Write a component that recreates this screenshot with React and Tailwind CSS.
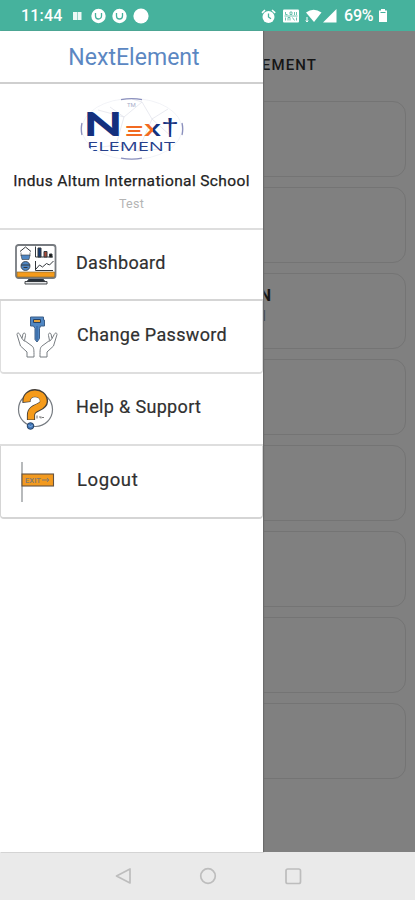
import React from 'react'

const STATUS_FONT = "font-['Roboto',sans-serif]"

const StatusBar = () => (
  <header className={`flex h-[31px] shrink-0 items-center bg-[#46b29d] pl-[21px] pr-[27px] text-white ${STATUS_FONT}`}>
    <span className="w-[42px] whitespace-nowrap text-[16px] font-medium leading-none tracking-[0.2px]">11:44</span>
    <svg className="ml-[9px]" width="78" height="16" viewBox="0 0 78 16" fill="#fff">
      <path d="M1 4h4v8H1zM5.500 4h4v8h-4z" opacity=".9" />
      <circle cx="26.500" cy="8" r="7.200" />
      <circle cx="47.500" cy="8" r="7.200" />
      <circle cx="69" cy="8" r="7.600" />
      <g fill="none" stroke="#46b29d" strokeWidth="1.300">
        <path d="M23.500 5v3a3 3 0 0 0 6 0V5" />
        <path d="M44.500 5v3a3 3 0 0 0 6 0V5" />
      </g>
    </svg>
    <svg className="ml-auto overflow-visible" width="77" height="16" viewBox="0 0 77 16" fill="#fff">
      {/* alarm */}
      <circle cx="5.500" cy="9" r="6" />
      <path d="M-1 4.800 2 2M12.200 4.800 9 2" stroke="#fff" strokeWidth="1.600" />
      <path d="M5.500 5.500V9l2.500 1.800" fill="none" stroke="#46b29d" strokeWidth="1.300" />
      {/* volte */}
      <rect x="20" y="1.500" width="16" height="13" rx="1" />
      <path d="M22.500 4v2.500h2M27 4h2v2.500h-2zM31.500 4v3M33.500 4v3M22.500 9.500v3M25 12.500v-3h2v3M29.500 9.500l2 3M33.500 9.500v3M21.500 8h13" fill="none" stroke="#46b29d" strokeWidth=".8" />
      {/* wifi + signal */}
      <path d="M43 4.500Q50.500 -1 58.500 4.500L51 14Z" />
      <path d="M44 9v5M42.800 12.500 44 14l1.200-1.500" fill="none" stroke="#fff" />
      <path d="M60 14.500 73.500 1v13.500z" />
    </svg>
    <span className="ml-[4px] w-[31px] whitespace-nowrap text-[16px] font-medium leading-none tracking-[-0.2px]">69%</span>
    <svg className="ml-[3px]" width="10" height="15" viewBox="0 0 10 15" fill="#fff">
      <path d="M3 1h4v1.500h2V14H1V2.500h2z" />
      <path d="M2.500 4.500h5" stroke="#46b29d" />
    </svg>
  </header>
)

const Logo = () => (
  <svg className="block" width="104" height="64" viewBox="0 0 104 64">
    <g fill="none" stroke="#dfe1ea" strokeWidth=".7">
      <path d="M18 13 44 20 62 5 72 22 88 12M44 20 36 48 58 54 72 22M30 10 44 20M72 22 92 40M36 48 22 50M58 54 80 52M52 2 62 5" />
    </g>
    <ellipse cx="52" cy="32" rx="50" ry="30.500" fill="none" stroke="#eceef3" strokeWidth=".7" />
    <g fill="none" stroke="#8b90bd" strokeWidth="1.300">
      <path d="M41 2.700Q52 .5 62 2.700M41 61.200Q52 63 62 61.200" />
      <path d="M2 26Q.5 32 2 38M102 26Q103.500 32 102 38" />
    </g>
    <text x="47" y="9.500" fontFamily="Roboto, sans-serif" fontSize="6" fill="#a6acc9">TM</text>
    <text x="3.500" y="39" fontFamily="Lato, sans-serif" fontSize="33" fontWeight="900" fill="#14307e" textLength="39" lengthAdjust="spacingAndGlyphs">N</text>
    <text x="43" y="39" fontFamily="'DejaVu Sans', sans-serif" fontSize="14" fontWeight="700" fill="#f26a21" textLength="22" lengthAdjust="spacingAndGlyphs">Ξ</text>
    <defs>
      <linearGradient id="xSplit">
        <stop offset="50%" stopColor="#f26a21" />
        <stop offset="50%" stopColor="#14307e" />
      </linearGradient>
    </defs>
    <text x="64" y="39" fontFamily="'Open Sans', sans-serif" fontSize="21" fontWeight="600" fill="url(#xSplit)" textLength="17" lengthAdjust="spacingAndGlyphs">x</text>
    <text x="81" y="37.500" fontFamily="'Liberation Sans', sans-serif" fontSize="24" fill="#14307e" textLength="18" lengthAdjust="spacingAndGlyphs">†</text>
    <text x="7" y="54" fontFamily="'Open Sans', sans-serif" fontSize="13" fontWeight="500" fill="#27408c" textLength="88" lengthAdjust="spacingAndGlyphs">ELEMENT</text>
    <path d="M5 48 17 56H5zM99 48 90 56h9z" fill="#fff" />
  </svg>
)

const DashboardIcon = () => (
  <svg width="42" height="42" viewBox="0 0 42 42" fill="none" stroke="#33383d" strokeWidth="1">
    <path d="M10 37.500h22v2.500H10z" fill="#e5e7e9" strokeWidth=".9" />
    <path d="M15 34h12l3 3.500H12z" fill="#28313a" />
    <rect x="1" y="1" width="39.500" height="33" rx="2.500" fill="#fff" stroke="#777b80" strokeWidth="1.800" />
    <path d="M2 28h37.500v5H2z" fill="#f59b1b" stroke="#8a6a35" strokeWidth=".7" />
    <path d="M5 7.500 10.500 3l5.500 4.500" />
    <path d="M6 11h9l-1 4.500H7z" fill="#4f87c4" strokeWidth=".6" />
    <path d="M6 8.500v3M15 8.500v3" strokeWidth=".6" />
    <circle cx="10.500" cy="22" r="4.500" fill="#4f87c4" strokeWidth=".8" />
    <path d="M6 21h9M8.500 23.500h4" strokeWidth="1.200" />
    <path d="M20.500 2.500V13H38M20.500 17v9.500H38" />
    <path d="M23 4h3v9h-3z" fill="#173a72" />
    <path d="M29 7.500h3V13h-3z" fill="#a94836" />
    <path d="M34.500 10H37v3h-2.500z" fill="#111" />
    <path d="m21 25 3.500-4 3 2 4-3.500 3 1.500 4-4" />
  </svg>
)

const KeyHandsIcon = () => (
  <svg width="42" height="42" viewBox="0 0 42 42" fill="none" stroke="#777c81" strokeWidth="1" strokeLinejoin="round">
    <path d="M14.500 1h13v3h1v6h-4l-1 2.500v10L21 26l-2-2.500v-11L17.500 10h-3z" fill="#4f87c4" stroke="#3d5e87" />
    <path d="M17.500 3.500h7v3h-7z" fill="#e3a13a" stroke="#284264" />
    <path d="M21 10v14" stroke="#315f99" />
    <path d="M11 41v-5l-6.500-6L1 18.500c0-2 2-2 2.800 0l2.200 4 1-4.500c1-2 3-.5 2.500 1.500l-1 5 7.500 5.500c2 1.500 2 4 2 11z" fill="#fff" />
    <path d="m6 22.500 2.500 3" />
    <path d="M31 41v-5l6.500-6L41 18.500c0-2-2-2-2.800 0l-2.200 4-1-4.500c-1-2-3-.5-2.500 1.500l1 5L26 30c-2 1.500-2 4-2 11z" fill="#fff" />
    <path d="m36 22.500-2.500 3" />
  </svg>
)

const HelpIcon = () => (
  <svg width="38" height="42" viewBox="0 0 38 42" fill="none">
    <circle cx="18.500" cy="21.500" r="17" stroke="#777c82" strokeWidth="1.200" />
    <path d="M9.500 14.500C8 2.500 27 2 27 13.500C26.500 21 14 18 14 27V32" stroke="#47413a" strokeWidth="8.200" />
    <path d="M9.600 13.800C9 3 26.500 3 26.500 13.500C26 20.500 14 18 14 27V31.500" stroke="#f59b1b" strokeWidth="6.400" />
    <path d="M20 27.500v3M22 29h2v1.500M25 29.500h2" stroke="#777" strokeWidth="1.100" />
    <circle cx="13.500" cy="38" r="3.300" fill="#4379bb" stroke="#284264" />
    <path d="m11.500 37 2 2 2-2" stroke="#9dc3ea" strokeWidth=".8" />
  </svg>
)

const LogoutIcon = () => (
  <svg width="36" height="42" viewBox="0 0 36 42">
    <path d="M3 1v40" stroke="#b0b3b5" strokeWidth="1.800" />
    <rect x="3" y="13" width="31.500" height="12" fill="#f39a1f" stroke="#655341" strokeWidth="1.100" />
    <text x="6" y="21.500" fontFamily="Roboto, sans-serif" fontSize="7" fontWeight="500" fill="#81796f" textLength="16" lengthAdjust="spacingAndGlyphs">EXIT</text>
    <path d="M23 19h7m-2-2 2 2-2 2" fill="none" stroke="#81796f" />
  </svg>
)

const MENU = [
  { label: 'Dashboard', Icon: DashboardIcon, row: 'h-[71px] border-b-2 border-[#d5d5d5]', icon: 'ml-[15px]', text: '-mt-[4px] ml-[76px] text-[18px] tracking-[0.3px]' },
  { label: 'Change Password', Icon: KeyHandsIcon, row: 'h-[73px] rounded-b-[4px] border-x border-b-2 border-[#dedede]', icon: 'ml-[15px]', text: '-mt-[3px] ml-[76px] text-[18px] tracking-[0.34px]' },
  { label: 'Help & Support', Icon: HelpIcon, row: 'h-[72px] border-b-2 border-[#dedede]', icon: 'ml-[17px]', text: '-mt-[5px] ml-[76px] text-[18px] tracking-[0.34px]' },
  { label: 'Logout', Icon: LogoutIcon, row: 'h-[73px] rounded-b-[4px] border-x border-b-2 border-[#d5d5d5]', icon: 'ml-[18px]', text: '-mt-[4px] ml-[76px] text-[18.5px] tracking-[0.6px]' },
]

const MenuItem = ({ label, Icon, row, icon, text }) => (
  <li className={`grid items-center ${row}`}>
    <div className={`col-start-1 row-start-1 ${icon}`}><Icon /></div>
    <span className={`col-start-1 row-start-1 whitespace-nowrap leading-6 text-[#303030] [-webkit-text-stroke:0.2px_#303030] ${text}`}>{label}</span>
  </li>
)

const Drawer = () => (
  <aside className="absolute inset-y-0 left-0 w-[263px] bg-white shadow-[1px_0_1px_#6b6b6b]">
    <h1 className="flex h-[53px] items-center justify-center border-b-2 border-[#cfcfcf] pl-[5px] pt-[3px] text-[23px] tracking-[0.03px] text-[#5b87c2]">NextElement</h1>
    <section className="flex h-[146px] flex-col items-center border-b-2 border-[#dedede] pt-[13px]">
      <Logo />
      <p className="mt-[10px] whitespace-nowrap text-[15.5px] leading-5 tracking-[0.37px] text-[#222] [-webkit-text-stroke:0.25px_#222]">Indus Altum International School</p>
      <p className="mt-[3px] text-[12.5px] leading-5 tracking-[0.3px] text-[#b4b4b4]">Test</p>
    </section>
    <ul>
      {MENU.map((item) => <MenuItem key={item.label} {...item} />)}
    </ul>
  </aside>
)

const CARDS = [null, null, 'N', null, null, null, null, null]

const HomeScreen = () => (
  <div className="flex h-full flex-col bg-[#808080]">
    <h2 className="flex h-[70px] items-center justify-end pb-[2px] pr-[98px] text-[15px] font-medium tracking-[1.1px] text-[#161616]">NEXT ELEMENT</h2>
    <div className="flex flex-col gap-[10px] px-[9px]">
      {CARDS.map((title, i) => (
        <div key={i} className="h-[76px] rounded-[13px] border border-[#747474] pr-[134px] pt-[10px] text-right">
          {title && <p className="text-[16px] font-bold leading-6 text-[#161616]">{title}</p>}
          {title && <p className="pr-[5px] text-[14px] leading-4 text-[#444]">l</p>}
        </div>
      ))}
    </div>
  </div>
)

const NavBar = () => (
  <footer className="flex h-[48px] shrink-0 items-center bg-[#eaeaea] pl-[115px]">
    <svg width="188" height="18" viewBox="0 0 188 18" fill="none" stroke="#bdbdbd" strokeWidth="1.700" strokeLinejoin="round">
      <path d="M1.500 9 15 2v14z" />
      <circle cx="93" cy="9" r="7.300" />
      <rect x="171" y="2" width="14.500" height="14.500" rx="1.800" />
    </svg>
  </footer>
)

export default function App() {
  return (
    <div className="flex h-[900px] w-[415px] flex-col overflow-hidden font-['Roboto',sans-serif]">
      <StatusBar />
      <main className="relative h-[821px] shrink-0">
        <HomeScreen />
        <Drawer />
      </main>
      <NavBar />
    </div>
  )
}
